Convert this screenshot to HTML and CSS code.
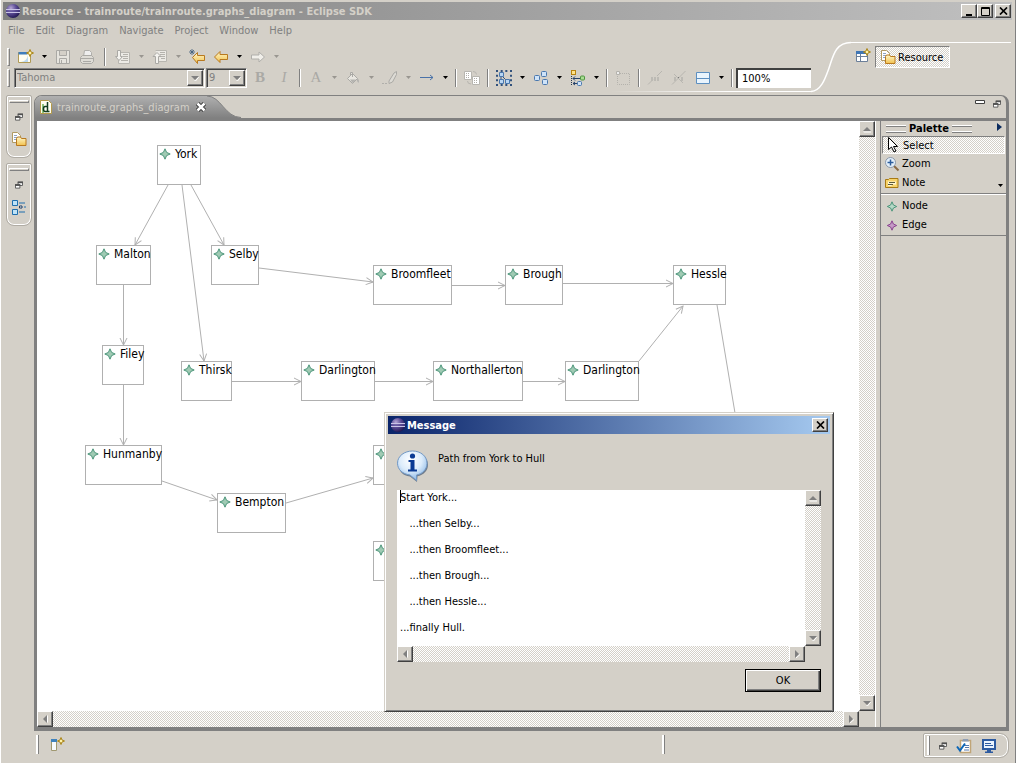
FILE: index.html
```html
<!DOCTYPE html>
<html lang="en">
<head>
<meta charset="utf-8">
<title>Resource - trainroute/trainroute.graphs_diagram - Eclipse SDK</title>
<link rel="stylesheet" href="styles.css">
</head>
<body>
<svg class="defs" aria-hidden="true">
  <defs>
    <radialGradient id="orb" cx="35%" cy="30%" r="75%"><stop offset="0" stop-color="#b5a6d6"/><stop offset=".5" stop-color="#5a4a94"/><stop offset="1" stop-color="#1f1650"/></radialGradient>
    <linearGradient id="gold" x1="0" y1="0" x2="0" y2="1"><stop offset="0" stop-color="#fff8cc"/><stop offset="1" stop-color="#f2c14e"/></linearGradient>
    <linearGradient id="tabfill" x1="0" y1="0" x2="0" y2="1"><stop offset="0" stop-color="#b0b0b0"/><stop offset="1" stop-color="#808080"/></linearGradient>
    <radialGradient id="bubble" cx="45%" cy="30%" r="75%"><stop offset="0" stop-color="#ffffff"/><stop offset=".5" stop-color="#dcecfb"/><stop offset="1" stop-color="#7eaee2"/></radialGradient>
    <marker id="tip" viewBox="0 0 10 10" refX="8" refY="5" markerWidth="10" markerHeight="10" orient="auto" markerUnits="userSpaceOnUse"><path d="M1 1.500L8 5L1 8.500" fill="none" stroke="#b0b0b0"/></marker>
  </defs>
  <symbol id="i-orb" viewBox="0 0 16 16"><circle cx="8" cy="8" r="7" fill="url(#orb)"/><path d="M1 6.500h14M1 9.500h14" stroke="#c9c3e6"/><path d="M1 8h14" stroke="#5a4c98"/></symbol>
  <symbol id="i-star" viewBox="0 0 12 12"><path d="M6 .8L7.600 4.400L11.200 6L7.600 7.600L6 11.200L4.400 7.600L.8 6L4.400 4.400Z" fill="#9fcab3" stroke="#4c957a"/></symbol>
  <symbol id="i-restore" viewBox="0 0 9 8"><path d="M3.500 1h5v3.500h-5z" fill="#fff" stroke="#505050"/><path d="M3 1h6" stroke="#505050" stroke-width="2"/><path d="M.5 4h5v3.500h-5z" fill="#fff" stroke="#505050"/><path d="M0 4h6" stroke="#505050" stroke-width="2"/></symbol>
  <symbol id="i-folder" viewBox="0 0 16 16"><path d="M1.500 1.500h5l3 3v7h-8z" fill="#fff" stroke="#b19a62"/><path d="M3 4.500h3M3 6.500h4M3 8.500h2" stroke="#8ea3c4"/><path d="M5.500 7.500l1-1.500h3l1 1.500h4.500v7h-9.500z" fill="url(#gold)" stroke="#b8791f"/></symbol>
  <symbol id="i-spark" viewBox="0 0 8 8"><path d="M4 .5L5 3L7.500 4L5 5L4 7.500L3 5L.5 4L3 3Z" fill="#fff3a8" stroke="#a98317"/></symbol>
  <symbol id="a-up" viewBox="0 0 8 8"><path d="M0 6.500h8v1H1z" fill="#fff"/><path d="M0 6L4 2L8 6z" fill="#808080"/></symbol>
  <symbol id="a-down" viewBox="0 0 8 8"><path d="M8 2.500L4.500 7l-1-1" stroke="#fff" fill="none"/><path d="M0 2h8L4 6z" fill="#808080"/></symbol>
  <symbol id="a-left" viewBox="0 0 8 8"><path d="M6.500 .5v7" stroke="#fff"/><path d="M6 0v8L2 4z" fill="#808080"/></symbol>
  <symbol id="a-right" viewBox="0 0 8 8"><path d="M2.500 8.500L7 4.500" stroke="#fff"/><path d="M2 0v8l4-4z" fill="#808080"/></symbol>
  <symbol id="a-drop" viewBox="0 0 5 3"><path d="M0 0h5L2.500 3z" fill="currentColor"/></symbol>
  <symbol id="i-x" viewBox="0 0 9 8"><path d="M1 .5l7 7M8 .5l-7 7" stroke="#000" stroke-width="1.700"/></symbol>
</svg>

<header class="titlebar">
  <svg class="i16"><use href="#i-orb"/></svg>
  <h1>Resource - trainroute/trainroute.graphs_diagram - Eclipse SDK</h1>
  <div class="winbtns">
    <button class="cap" aria-label="Minimize"><svg width="9" height="9"><path d="M1 7h6v2H1z"/></svg></button>
    <button class="cap" aria-label="Maximize"><svg width="9" height="9"><path d="M.5 .5h8v8h-8zM0 1.500h9" fill="none" stroke="#000"/></svg></button>
    <button class="cap gap" aria-label="Close"><svg width="9" height="8"><use href="#i-x"/></svg></button>
  </div>
</header>

<nav class="menubar">
  <button>File</button><button>Edit</button><button>Diagram</button><button>Navigate</button><button>Project</button><button>Window</button><button>Help</button>
</nav>

<div class="coolbar">
  <div class="bars">
    <div class="row">
      <span class="grip"></span>
      <button class="tool" aria-label="New"><svg class="i16" viewBox="0 0 16 16"><path d="M.5 3.500h12v10H.5z" fill="#fffdf2" stroke="#b09a55"/><path d="M.5 3h9v2.500h-9z" fill="#3f7dbd"/><path d="M3 13q6-1 7-7v7z" fill="#bcd9f2"/><use href="#i-spark" x="8" y="0" width="8" height="8"/></svg></button>
      <button class="drop" aria-label="New menu"><svg><use href="#a-drop"/></svg></button>
      <button class="tool" disabled aria-label="Save"><svg class="i16" viewBox="0 0 16 16"><path d="M1.500 1.500h13v13h-13zM4.500 1.500v5h7v-5M4.500 14.500v-5h7v5M6.500 11v3" fill="#e6e4de" stroke="#aaa9a5"/></svg></button>
      <button class="tool" disabled aria-label="Print"><svg class="i16" viewBox="0 0 16 16"><path d="M4.500 7.500l1-6h5l2 2v4" fill="#eee" stroke="#b0afab"/><path d="M1.500 8.500l2-2h9l2 2v4l-2 2h-9l-2-2zM2 9.500h12M4 12.500h8" fill="#dedcd6" stroke="#aaa9a5"/></svg></button>
      <span class="sep wide"></span>
      <button class="tool" disabled aria-label="Next annotation"><svg class="i16" viewBox="0 0 16 16"><path d="M5.500 3.500h9v11h-11v-4" fill="#eceae5" stroke="#b8b6b0"/><path d="M8 5.500h5M8 7.500h5M8 9.500h5M6 11.500h7" stroke="#b4b2ac"/><path d="M2.500 1.500h3v6h2L4 11.500L.5 7.500h2z" fill="#f4f3ef" stroke="#aaa9a5"/></svg></button>
      <button class="drop" disabled aria-label="Next menu"><svg><use href="#a-drop"/></svg></button>
      <button class="tool" disabled aria-label="Previous annotation"><svg class="i16" viewBox="0 0 16 16"><path d="M3.500 1.500h11v11h-8" fill="#eceae5" stroke="#b8b6b0"/><path d="M8 3.500h5M8 5.500h5M9 7.500h4M9 9.500h4" stroke="#b4b2ac"/><path d="M3.500 14.500v-7h-2.500L5 3.500L9 7.500H6.500v7z" fill="#f4f3ef" stroke="#aaa9a5"/></svg></button>
      <button class="drop" disabled aria-label="Previous menu"><svg><use href="#a-drop"/></svg></button>
      <button class="tool" aria-label="Last edit location"><svg class="i16" viewBox="0 0 16 16"><path d="M3.500 8.500l5-5v3h7v5h-7v3z" fill="url(#gold)" stroke="#b8791f"/><path d="M3 0v6M0 3h6M1 1l4 4M5 1l-4 4" stroke="#3e5c7a" stroke-width=".8"/></svg></button>
      <button class="tool" aria-label="Back"><svg class="i16" viewBox="0 0 16 16"><path d="M1.500 8l5.500-5.500v3h7.500v5H7v3z" fill="url(#gold)" stroke="#b8791f"/></svg></button>
      <button class="drop" aria-label="Back menu"><svg><use href="#a-drop"/></svg></button>
      <button class="tool" disabled aria-label="Forward"><svg class="i16" viewBox="0 0 16 16"><path d="M14.500 8L9 3v3H1.500v4H9v3z" fill="#f1efea" stroke="#b0afab"/></svg></button>
      <button class="drop" disabled aria-label="Forward menu"><svg><use href="#a-drop"/></svg></button>
    </div>
    <div class="row">
      <span class="grip"></span>
      <div class="combo font"><select disabled aria-label="Font"><option>Tahoma</option></select><span class="knob"><svg><use href="#a-down"/></svg></span></div>
      <div class="combo size"><select disabled aria-label="Font size"><option>9</option></select><span class="knob"><svg><use href="#a-down"/></svg></span></div>
      <button class="tool letter" disabled aria-label="Bold"><b>B</b></button>
      <button class="tool letter" disabled aria-label="Italic"><i>I</i></button>
      <span class="sep"></span>
      <button class="tool letter" disabled aria-label="Font color">A</button>
      <button class="drop" disabled aria-label="Font color menu"><svg><use href="#a-drop"/></svg></button>
      <button class="tool" disabled aria-label="Fill color"><svg class="i16" viewBox="0 0 16 16"><path d="M2.500 8.500l5-5l5 5l-5 5zM5.500 6V2.500h2V7" fill="#e8e6e0" stroke="#aaa9a5"/><path d="M5 9.500h6l-3.500 3.500zM12 8q3 2 1.500 5l-1.500-2z" fill="#b4b3af"/></svg></button>
      <button class="drop" disabled aria-label="Fill color menu"><svg><use href="#a-drop"/></svg></button>
      <button class="tool" disabled aria-label="Line color"><svg class="i16" viewBox="0 0 16 16"><path d="M7 11l5-8l2.500-1.500v3L10.500 12L7 13.500z" fill="#dddbd5" stroke="#aaa9a5"/><path d="M0 13.500h6" stroke="#b0afab" stroke-dasharray="2 1"/></svg></button>
      <button class="drop" disabled aria-label="Line color menu"><svg><use href="#a-drop"/></svg></button>
      <button class="tool" aria-label="Line style"><svg class="i16" viewBox="0 0 16 16"><path d="M1 7.500h13M11 5l3 2.500L11 10" fill="none" stroke="#4a72a8"/></svg></button>
      <button class="drop" aria-label="Line style menu"><svg><use href="#a-drop"/></svg></button>
      <span class="sep"></span>
      <button class="tool" disabled aria-label="Copy appearance"><svg class="i16" viewBox="0 0 16 16"><path d="M.5 1.500h7v8h-7zM8.500 6.500h7v8h-7z" fill="#fff" stroke="#b8b6b0"/><path d="M2 3.500h4M2 5.500h4M2 7.500h4M10 8.500h4M10 10.500h4M10 12.500h4" stroke="#b0aea8" stroke-dasharray="1 1"/><path d="M9 1.500q3.500 0 3.500 3M3.500 11q0 3 3.500 3" fill="none" stroke="#b8b6b0"/></svg></button>
      <span class="sep"></span>
      <button class="tool" aria-label="Select all"><svg class="i16" viewBox="0 0 16 16"><path d="M1 0v16M15 0v16M0 1h16M0 15h16" stroke="#31517c" stroke-width="2" stroke-dasharray="2 2.670"/><path d="M5 6v5M6 6l5 5" stroke="#31517c"/><path d="M3.500 2.500h4v4h-4zM3.500 9.500h4v4h-4zM9.500 9.500h4v4h-4z" fill="#b9d6f3" stroke="#4a78ae"/></svg></button>
      <button class="drop" aria-label="Select menu"><svg><use href="#a-drop"/></svg></button>
      <button class="tool" aria-label="Arrange"><svg class="i16" viewBox="0 0 16 16"><rect x="1.500" y="5.500" width="5" height="5" rx="1" fill="#cfe3f8" stroke="#4a78ae"/><rect x="8.500" y="1.500" width="5" height="5" rx="1" fill="#cfe3f8" stroke="#4a78ae"/><rect x="9.500" y="9.500" width="5" height="5" rx="1" fill="#cfe3f8" stroke="#4a78ae"/></svg></button>
      <button class="drop" aria-label="Arrange menu"><svg><use href="#a-drop"/></svg></button>
      <button class="tool" aria-label="Align"><svg class="i16" viewBox="0 0 16 16"><path d="M1.500 0v16" stroke="#26384f" stroke-dasharray="1 1"/><path d="M3 8.500h7M5 6.500L3 8.500l2 2M3 13.500h4M5 12L3 13.500L5 15" stroke="#26426a" fill="none"/><rect x="1.500" y=".5" width="4" height="4" fill="#ffe28a" stroke="#b88410"/><rect x="10.500" y="6" width="4" height="4" rx="1" fill="#a9dd93" stroke="#4e9440"/><rect x="7.500" y="11.500" width="4" height="4" rx="1" fill="#cfe3f8" stroke="#4a78ae"/></svg></button>
      <button class="drop" aria-label="Align menu"><svg><use href="#a-drop"/></svg></button>
      <span class="sep"></span>
      <button class="tool" disabled aria-label="Auto size"><svg class="i16" viewBox="0 0 16 16"><path d="M3 3.500h11.500v11h-12V5" fill="none" stroke="#b4b2ac" stroke-dasharray="1 1"/><path d="M1.500 1.500h3v3h-3z" fill="#eee" stroke="#b4b2ac"/></svg></button>
      <span class="sep"></span>
      <button class="tool" disabled aria-label="Show connector labels"><svg class="i16" viewBox="0 0 16 16"><path d="M1 14.500l5-5M10 6l5-5" stroke="#b8b6b0"/><path d="M4 7h2v4H4zM7 7h2v4H7zM10 7h2v4h-2z" fill="#bcbab4"/></svg></button>
      <button class="tool" disabled aria-label="Hide connector labels"><svg class="i16" viewBox="0 0 16 16"><path d="M1 14.500L14.500 1M3 4l9 9" stroke="#b8b6b0"/><path d="M3 7h2v4H3zM10 7h2v4h-2z" fill="#bcbab4"/><path d="M7 7h1v1H7z" fill="#777"/></svg></button>
      <button class="tool" aria-label="Show compartment"><svg class="i16" viewBox="0 0 16 16"><path d="M1.500 2.500h13v11h-13zM1.500 8.500h13" fill="#e9f4fd" stroke="#5c8fc0"/></svg></button>
      <button class="drop" aria-label="Compartment menu"><svg><use href="#a-drop"/></svg></button>
      <span class="sep"></span>
      <input class="zoom" type="text" value="100%" aria-label="Zoom level">
      <span class="rule"></span>
    </div>
  </div>
  <svg class="curve" viewBox="0 0 40 51" aria-hidden="true"><path d="M0 50.500C10 50 14 38 18 27S24 1.500 40 1.500" fill="none" stroke="#fff" stroke-width="1.500"/></svg>
  <div class="persp">
    <button class="tool" aria-label="Open perspective"><svg class="i16" viewBox="0 0 16 16"><path d="M1.500 3.500h11v10h-11zM1.500 8.500h11M5.500 6v7.500" fill="#fff" stroke="#6b7f99"/><path d="M1 3h11v3H1z" fill="#3f76b5"/><use href="#i-spark" x="8" y="0" width="8" height="8"/></svg></button>
    <button class="resource"><svg class="i16"><use href="#i-folder"/></svg>Resource</button>
  </div>
</div>

<main class="work">
  <aside class="trims">
    <div class="trim"><span class="bar"></span>
      <button aria-label="Restore"><svg class="i8"><use href="#i-restore"/></svg></button>
      <button aria-label="Project explorer"><svg class="i16"><use href="#i-folder"/></svg></button></div>
    <div class="trim"><span class="bar"></span>
      <button aria-label="Restore"><svg class="i8"><use href="#i-restore"/></svg></button>
      <button aria-label="Outline"><svg class="i16" viewBox="0 0 16 16"><path d="M1.500 1.500h5v5h-5zM1.500 10.500h5v5h-5z" fill="#bfe3f7" stroke="#1f6fae"/><path d="M8 4h6M13 8h2M8 13h6" stroke="#1f6fae"/><path d="M8.500 7h2.500v2H8.500z" fill="#fff" stroke="#1d3c66"/></svg></button></div>
  </aside>

  <section class="editor">
    <div class="tabs">
      <div class="tab">
        <svg class="i16" viewBox="0 0 16 16"><path d="M2.500 1.500h8l3 3v10h-11z" fill="#fffef0" stroke="#b39a4a"/><path d="M4 5h2v9H4z" fill="#8fc47c"/><path d="M9.500 3v9M9 7.500H7q-1.500 0-1.500 2.500t1.500 2.500h2M8 12.500h3.500" fill="none" stroke="#123c1e" stroke-width="1.500"/></svg>
        <span>trainroute.graphs_diagram</span>
        <button aria-label="Close tab"><svg width="12" height="12" viewBox="0 0 12 12"><path d="M2.500 2.500l7 7M9.500 2.500l-7 7" stroke="#333" stroke-width="4.500"/><path d="M2.500 2.500l7 7M9.500 2.500l-7 7" stroke="#fff" stroke-width="2.500"/></svg></button>
      </div>
      <svg class="swoop" viewBox="0 0 34 22" preserveAspectRatio="none" aria-hidden="true"><path d="M0 0C14 0 18 21.500 34 21.500V22H0z" fill="url(#tabfill)"/><path d="M0 0C14 0 18 21.500 34 21.500" fill="none" stroke="#808080"/></svg>
      <div class="viewbtns">
        <button aria-label="Minimize editor"><svg width="10" height="4"><path d="M.5 .5h9v3h-9z" fill="#fff" stroke="#404040"/></svg></button>
        <button aria-label="Restore editor"><svg class="i8"><use href="#i-restore"/></svg></button>
      </div>
    </div>

    <div class="pane">
      <div class="canvas">
        <svg class="edges" aria-hidden="true"><g fill="none" stroke="#b0b0b0">
          <path marker-end="url(#tip)" d="M131 64L98 124"/><path marker-end="url(#tip)" d="M145 64L167 240"/><path marker-end="url(#tip)" d="M154 64L187 124"/>
          <path marker-end="url(#tip)" d="M222 147L336 161"/><path marker-end="url(#tip)" d="M415 164.500H468"/><path marker-end="url(#tip)" d="M526 162.500H636"/>
          <path marker-end="url(#tip)" d="M86.500 164V224"/><path marker-end="url(#tip)" d="M86.500 264V324"/><path marker-end="url(#tip)" d="M125 360L180 379"/>
          <path marker-end="url(#tip)" d="M249 382L336 357"/><path marker-end="url(#tip)" d="M195 260.500H264"/><path marker-end="url(#tip)" d="M338 260.500H396"/>
          <path marker-end="url(#tip)" d="M486 260.500H528"/><path marker-end="url(#tip)" d="M602 240L646 185"/><path d="M680 184L704 328"/>
        </g></svg>
        <div class="node" style="left:120px;top:24px;width:44px"><svg><use href="#i-star"/></svg>York</div>
        <div class="node" style="left:59px;top:124px;width:55px"><svg><use href="#i-star"/></svg>Malton</div>
        <div class="node" style="left:174px;top:124px;width:48px"><svg><use href="#i-star"/></svg>Selby</div>
        <div class="node" style="left:336px;top:144px;width:79px"><svg><use href="#i-star"/></svg>Broomfleet</div>
        <div class="node" style="left:468px;top:144px;width:58px"><svg><use href="#i-star"/></svg>Brough</div>
        <div class="node" style="left:636px;top:144px;width:53px"><svg><use href="#i-star"/></svg>Hessle</div>
        <div class="node" style="left:65px;top:224px;width:42px"><svg><use href="#i-star"/></svg>Filey</div>
        <div class="node" style="left:144px;top:240px;width:51px"><svg><use href="#i-star"/></svg>Thirsk</div>
        <div class="node" style="left:264px;top:240px;width:74px"><svg><use href="#i-star"/></svg>Darlington</div>
        <div class="node" style="left:396px;top:240px;width:90px"><svg><use href="#i-star"/></svg>Northallerton</div>
        <div class="node" style="left:528px;top:240px;width:74px"><svg><use href="#i-star"/></svg>Darlington</div>
        <div class="node" style="left:48px;top:324px;width:77px"><svg><use href="#i-star"/></svg>Hunmanby</div>
        <div class="node" style="left:180px;top:372px;width:69px"><svg><use href="#i-star"/></svg>Bempton</div>
        <div class="node" style="left:336px;top:324px;width:60px"><svg><use href="#i-star"/></svg></div>
        <div class="node" style="left:336px;top:420px;width:60px"><svg><use href="#i-star"/></svg></div>
      </div>
      <div class="scroll v"><button class="sb" aria-label="Scroll up"><svg class="i8"><use href="#a-up"/></svg></button><button class="sb" aria-label="Scroll down"><svg class="i8"><use href="#a-down"/></svg></button></div>
      <div class="scroll h"><button class="sb" aria-label="Scroll left"><svg class="i8"><use href="#a-left"/></svg></button><button class="sb" aria-label="Scroll right"><svg class="i8"><use href="#a-right"/></svg></button></div>
    </div>

    <aside class="palette">
      <h2><span class="lines"></span>Palette<span class="lines"></span><svg class="fly" width="5" height="8"><path d="M0 0l5 4l-5 4z" fill="#0a2a5e"/></svg></h2>
      <div class="group">
        <button class="item on"><svg class="i16" viewBox="0 0 16 16"><path d="M3.500 .5v12l3-2.500l2.500 5l2-1l-2.500-4.500h4z" fill="#fff" stroke="#000"/></svg>Select</button>
        <button class="item"><svg class="i16" viewBox="0 0 16 16"><path d="M10 10l4.500 4.500" stroke="#8a6a45" stroke-width="2"/><circle cx="6.500" cy="6.500" r="5" fill="#e4f0fb" stroke="#8a98aa"/><path d="M6.500 3.500v6M3.500 6.500h6" stroke="#2c5c9c" stroke-width="1.500"/></svg>Zoom</button>
        <button class="item"><svg class="i16" viewBox="0 0 16 16"><path d="M1.500 4.500h3l1-1h8.500v9H1.500z" fill="#f7d36a" stroke="#a87a14"/><path d="M4 6.500h8v3H9l-2 1.500H4z" fill="#fff6cf"/><path d="M5 7.500h6M4 9.500h5" stroke="#5c5a3a"/></svg>Note<svg class="more"><use href="#a-drop"/></svg></button>
      </div>
      <div class="group">
        <button class="item"><svg class="i16" viewBox="0 0 16 16"><path d="M8 3.800L9.400 7L12.700 8.500L9.400 10L8 13.200L6.600 10L3.300 8.500L6.600 7Z" fill="#b5d8c6" stroke="#4c957a"/></svg>Node</button>
        <button class="item"><svg class="i16" viewBox="0 0 16 16"><path d="M8 3.800L9.400 7L12.700 8.500L9.400 10L8 13.200L6.600 10L3.300 8.500L6.600 7Z" fill="#c59ac6" stroke="#8a4490"/></svg>Edge</button>
      </div>
    </aside>
  </section>
</main>

<footer class="status">
  <span class="mark"></span>
  <button class="tool" aria-label="Show view"><svg class="i16" viewBox="0 0 16 16"><path d="M2.500 4.500h5v10h-5z" fill="#f7fbff" stroke="#a09870"/><path d="M2 3h6v3H2z" fill="#3f82bd"/><use href="#i-spark" x="8" y="1" width="8" height="8"/></svg></button>
  <span class="mark mid"></span>
  <div class="fast">
    <span class="mark"></span>
    <button aria-label="Restore"><svg class="i8"><use href="#i-restore"/></svg></button>
    <button aria-label="Tasks"><svg class="i16" viewBox="0 0 16 16"><path d="M4.500 2.500h10v12h-10z" fill="#fff" stroke="#c0a578" stroke-width="1.500"/><path d="M6 3.500l1-2.500h5l1 2.500z" fill="#8d9db5"/><path d="M8 7.500h5M9 9.500h4M8 12h5" stroke="#5579ad"/><path d="M1 8.500l3 4l5-7" fill="none" stroke="#0d67b8" stroke-width="2"/></svg></button>
    <button aria-label="Console"><svg class="i16" viewBox="0 0 16 16"><path d="M2 2h12v9H2z" fill="#eaf4ff" stroke="#2c5aa0" stroke-width="2"/><path d="M4 5.500h6M4 7.500h8" stroke="#2c5aa0"/><path d="M6 12h4v1.500h2V15H4v-1.500h2z" fill="#2c5aa0"/></svg></button>
  </div>
</footer>

<div class="dialog" role="dialog" aria-labelledby="dlg-title">
  <div class="dlg-title"><svg class="i16"><use href="#i-orb"/></svg><h2 id="dlg-title">Message</h2><button class="cap" aria-label="Close"><svg width="9" height="8"><use href="#i-x"/></svg></button></div>
  <div class="dlg-body">
    <div class="info">
      <svg width="32" height="33" viewBox="0 0 32 33" aria-hidden="true"><path d="M16 2.500c8.500 0 15 5 15 12.200c0 6-4.500 10.300-10.500 11.500L20 32l-7-5.500C6 26 1.500 21 1.500 14.500C1.500 7.500 8 2.500 16 2.500z" fill="#6f7c8c"/><path d="M15.500 1C23.500 1 30 6 30 13.200c0 6-4.500 10.800-10.500 11.800v5.500L13 25C5.500 24 .5 19.500 .5 13.200C.5 6 7.500 1 15.500 1z" fill="url(#bubble)" stroke="#7299c6"/><circle cx="15.500" cy="6" r="2.600" fill="#0a3a94"/><path d="M11.500 10h6v9.500h2.500V21.500h-9v-2h2.500V12h-2z" fill="#0a3a94"/></svg>
      <label for="route">Path from York to Hull</label>
    </div>
    <div class="textgrid">
      <textarea id="route" readonly wrap="off">Start York...

   ...then Selby...

   ...then Broomfleet...

   ...then Brough...

   ...then Hessle...

...finally Hull.</textarea>
      <span class="caret"></span>
      <div class="scroll v"><button class="sb" aria-label="Scroll up"><svg class="i8"><use href="#a-up"/></svg></button><button class="sb" aria-label="Scroll down"><svg class="i8"><use href="#a-down"/></svg></button></div>
      <div class="scroll h"><button class="sb" aria-label="Scroll left"><svg class="i8"><use href="#a-left"/></svg></button><button class="sb" aria-label="Scroll right"><svg class="i8"><use href="#a-right"/></svg></button></div>
    </div>
    <button class="ok">OK</button>
  </div>
</div>
</body>
</html>
```
FILE: styles.css
```css
:root {
  --face: #d4d0c8;
  --dark: #808080;
  --ui: Tahoma, "DejaVu Sans Condensed", "Open Sans", sans-serif;
}
* { box-sizing: border-box; }
body {
  margin: 0;
  height: 100vh;
  padding: 2px 3px 0 2px;
  display: flex;
  flex-direction: column;
  background: var(--face);
  border-left: 1px solid #fff;
  border-right: 1px solid var(--dark);
  font: 11px/13px var(--ui);
  color: #000;
  overflow: hidden;
}
button, select, input, textarea { font: inherit; color: inherit; border-radius: 0; margin: 0; }
button { padding: 0; border: 0; background: none; }
h1, h2 { margin: 0; font-size: 11px; }
svg { display: block; flex: none; overflow: visible; }
.defs { position: absolute; width: 0; height: 0; }
.i16 { width: 16px; height: 16px; }
.i8 { width: 8px; height: 8px; }

.titlebar {
  height: 18px;
  flex: none;
  display: flex;
  align-items: center;
  gap: 1px;
  padding: 0 1px 0 2px;
  background: linear-gradient(90deg, #808080, #c0c0c0);
  color: var(--face);
}
.winbtns { margin-left: auto; display: flex; }
.cap, .sb, .knob {
  display: grid;
  place-items: center;
  width: 16px;
  height: 14px;
  background: var(--face);
  border: 1px solid;
  border-color: #fff #404040 #404040 #fff;
  box-shadow: inset -1px -1px #808080;
}
.cap.gap { margin-left: 2px; }

.menubar {
  height: 21px;
  flex: none;
  display: flex;
  align-items: center;
  gap: 11px;
  padding: 0 5px;
  color: var(--dark);
}

.coolbar { height: 51px; flex: none; display: flex; padding-right: 1px; }
.bars { display: flex; flex-direction: column; padding-top: 5px; }
.row { display: flex; align-items: center; height: 21px; position: relative; padding-left: 4px; }
.grip { width: 3px; height: 18px; margin-right: 4px; border: 1px solid; border-color: #fff #808080 #808080 #fff; }
.sep { width: 2px; height: 18px; margin: 0 3px; background: linear-gradient(90deg, #808080 50%, #fff 50%); }
.sep.wide { margin: 0 5px; }
.tool { width: 24px; height: 20px; display: grid; place-items: center; }
.drop { width: 13px; height: 20px; display: grid; place-items: center; }
.drop svg, .more { width: 5px; height: 3px; }
.drop:disabled { color: #999690; }
.letter { font: 15px "Liberation Serif", serif; }
.letter:disabled { color: #aaa9a5; }
.combo { display: flex; height: 20px; padding: 1px; margin-right: 1px; border: 1px solid; border-color: #808080 #fff #fff #808080; box-shadow: inset 1px 1px #404040; }
.combo.font { width: 191px; }
.combo.size { width: 41px; }
.combo select { flex: 1; min-width: 0; appearance: none; border: 0; padding: 0 1px; background: none; color: var(--dark); opacity: 1; }
.knob { height: 16px; }
.knob svg { width: 8px; height: 8px; }
.zoom { width: 75px; height: 20px; padding: 0 4px; border: 0; border-top: 2px solid #404040; border-left: 2px solid #404040; background: #fff; }
.rule { position: absolute; right: 0; bottom: -4px; width: 200px; height: 1px; background: linear-gradient(90deg, transparent, #fff 60%); }
.curve { width: 40px; height: 51px; }
.persp { flex: 1; margin-top: 1px; padding: 3px 0 0; display: flex; align-items: flex-start; border-top: 1px solid #fff; }
.resource {
  display: flex;
  align-items: center;
  gap: 2px;
  height: 22px;
  padding: 0 6px 0 4px;
  border: 1px solid;
  border-color: #808080 #fff #fff #808080;
}
.resource, .scroll, .item.on { background: repeating-conic-gradient(#fff 0 25%, #d4d0c8 0 50%) 0 0 / 2px 2px; }

.work { flex: 1; min-height: 0; display: flex; gap: 2px; padding: 3px 3px 0; }
.trims { width: 26px; display: flex; flex-direction: column; gap: 5px; }
.trim {
  height: 63px;
  display: flex;
  flex-direction: column;
  align-items: center;
  gap: 10px;
  padding-top: 4px;
  border: 1px solid #b0aca4;
  border-radius: 2px 2px 8px 8px;
  box-shadow: inset 0 0 0 1px #fff;
}
.trim .bar { width: 20px; height: 3px; border: 1px solid; border-color: #fff #808080 #808080 #fff; }

.editor {
  flex: 1;
  min-width: 0;
  display: grid;
  grid-template: 25px 1fr / 1fr 131px;
  border: solid var(--dark);
  border-width: 1px 3px 4px 1px;
  border-radius: 8px 8px 0 0;
}
.tabs { grid-column: 1 / -1; display: flex; border-bottom: 3px solid var(--dark); }
.tab {
  display: flex;
  align-items: center;
  gap: 3px;
  padding-left: 3px;
  background: linear-gradient(#b0b0b0, #808080);
  border-radius: 7px 0 0 0;
  color: var(--face);
}
.tab button { margin-left: 2px; }
.swoop { width: 34px; height: 22px; }
.viewbtns { margin-left: auto; display: flex; gap: 8px; padding: 4px 5px 0 0; align-items: flex-start; }

.pane { display: grid; grid-template: 1fr 16px / 1fr 16px; border-left: 2px solid var(--dark); min-width: 0; }
.canvas { position: relative; background: #fff; overflow: hidden; }
.edges { position: absolute; inset: 0; width: 100%; height: 100%; }
.node {
  position: absolute;
  height: 40px;
  display: flex;
  align-items: flex-start;
  gap: 4px;
  padding: 1px;
  border: 1px solid #b0b0b0;
  background: #fff;
  font-size: 12px;
  line-height: 15px;
  white-space: nowrap;
}
.node svg { width: 12px; height: 12px; margin-top: 1px; }
.scroll { display: flex; justify-content: space-between; }
.scroll.v { flex-direction: column; }
.sb { width: 16px; height: 16px; flex: none; }

.palette { margin-left: 5px; border-left: 1px solid var(--dark); box-shadow: -4px 0 #d4d0c8, -5px 0 #fff; }
.palette h2 { height: 14px; display: flex; align-items: center; justify-content: center; gap: 3px; position: relative; padding-right: 29px; }
.palette h2 .lines { width: 20px; height: 7px; border: solid #fff; border-width: 1px 0; box-shadow: 0 1px #808080, inset 0 -2px #d4d0c8, inset 0 1px #808080; }
.fly { position: absolute; right: 4px; top: 2px; }
.group { border-bottom: 1px solid var(--dark); box-shadow: 0 1px #fff; padding: 1px 1px 1px; }
.group + .group { padding-top: 2px; box-shadow: none; }
.item { display: flex; align-items: center; gap: 2px; width: 100%; height: 19px; padding: 0 2px; text-align: left; }
.item.on { height: 18px; border: 1px solid; border-color: #808080 #fff #fff #808080; }
.more { margin-left: auto; align-self: flex-end; margin-bottom: 5px; }

.status { height: 32px; flex: none; display: flex; align-items: flex-start; padding: 2px 3px 0 33px; }
.mark { width: 3px; height: 19px; margin: 2px 0 0 0; border-left: 2px solid #fff; border-right: 1px solid #808080; }
.status .tool { margin: 1px 0 0 6px; }
.mark.mid { margin-left: 593px; }
.fast { margin-left: auto; height: 25px; display: flex; align-items: center; gap: 9px; padding: 0 11px 0 3px; border: 1px solid #b0aca4; border-radius: 2px 9px 9px 2px; box-shadow: inset 0 0 0 1px #fff; }
.fast .mark { margin: 0; }

.dialog {
  position: absolute;
  left: 384px;
  top: 412px;
  width: 450px;
  padding: 2px;
  background: var(--face);
  border: 1px solid;
  border-color: #d4d0c8 #404040 #404040 #d4d0c8;
  box-shadow: inset 1px 1px #fff, inset -1px -1px #808080;
}
.dlg-title {
  display: flex;
  align-items: center;
  gap: 1px;
  height: 18px;
  margin: 1px;
  padding: 0 2px;
  background: linear-gradient(90deg, #0a246a, #a6caf0);
  color: #fff;
}
.dlg-title .cap { margin-left: auto; }
.dlg-body { padding: 15px 10px 17px; display: flex; flex-direction: column; }
.info { display: flex; gap: 9px; height: 40px; }
.info label { padding-top: 2px; }
.textgrid { position: relative; display: grid; grid-template: 156px 16px / 1fr 16px; }
.textgrid textarea { border: 0; outline: 0; resize: none; overflow: hidden; padding: 1px 3px; background: #fff; }
.caret { position: absolute; left: 3px; top: 0; width: 1px; height: 13px; background: #000; }
.ok {
  align-self: flex-end;
  width: 76px;
  height: 23px;
  margin-top: 7px;
  border: 1px solid #000;
  box-shadow: inset 1px 1px #fff, inset -1px -1px #404040, inset -2px -2px #808080;
}
```
